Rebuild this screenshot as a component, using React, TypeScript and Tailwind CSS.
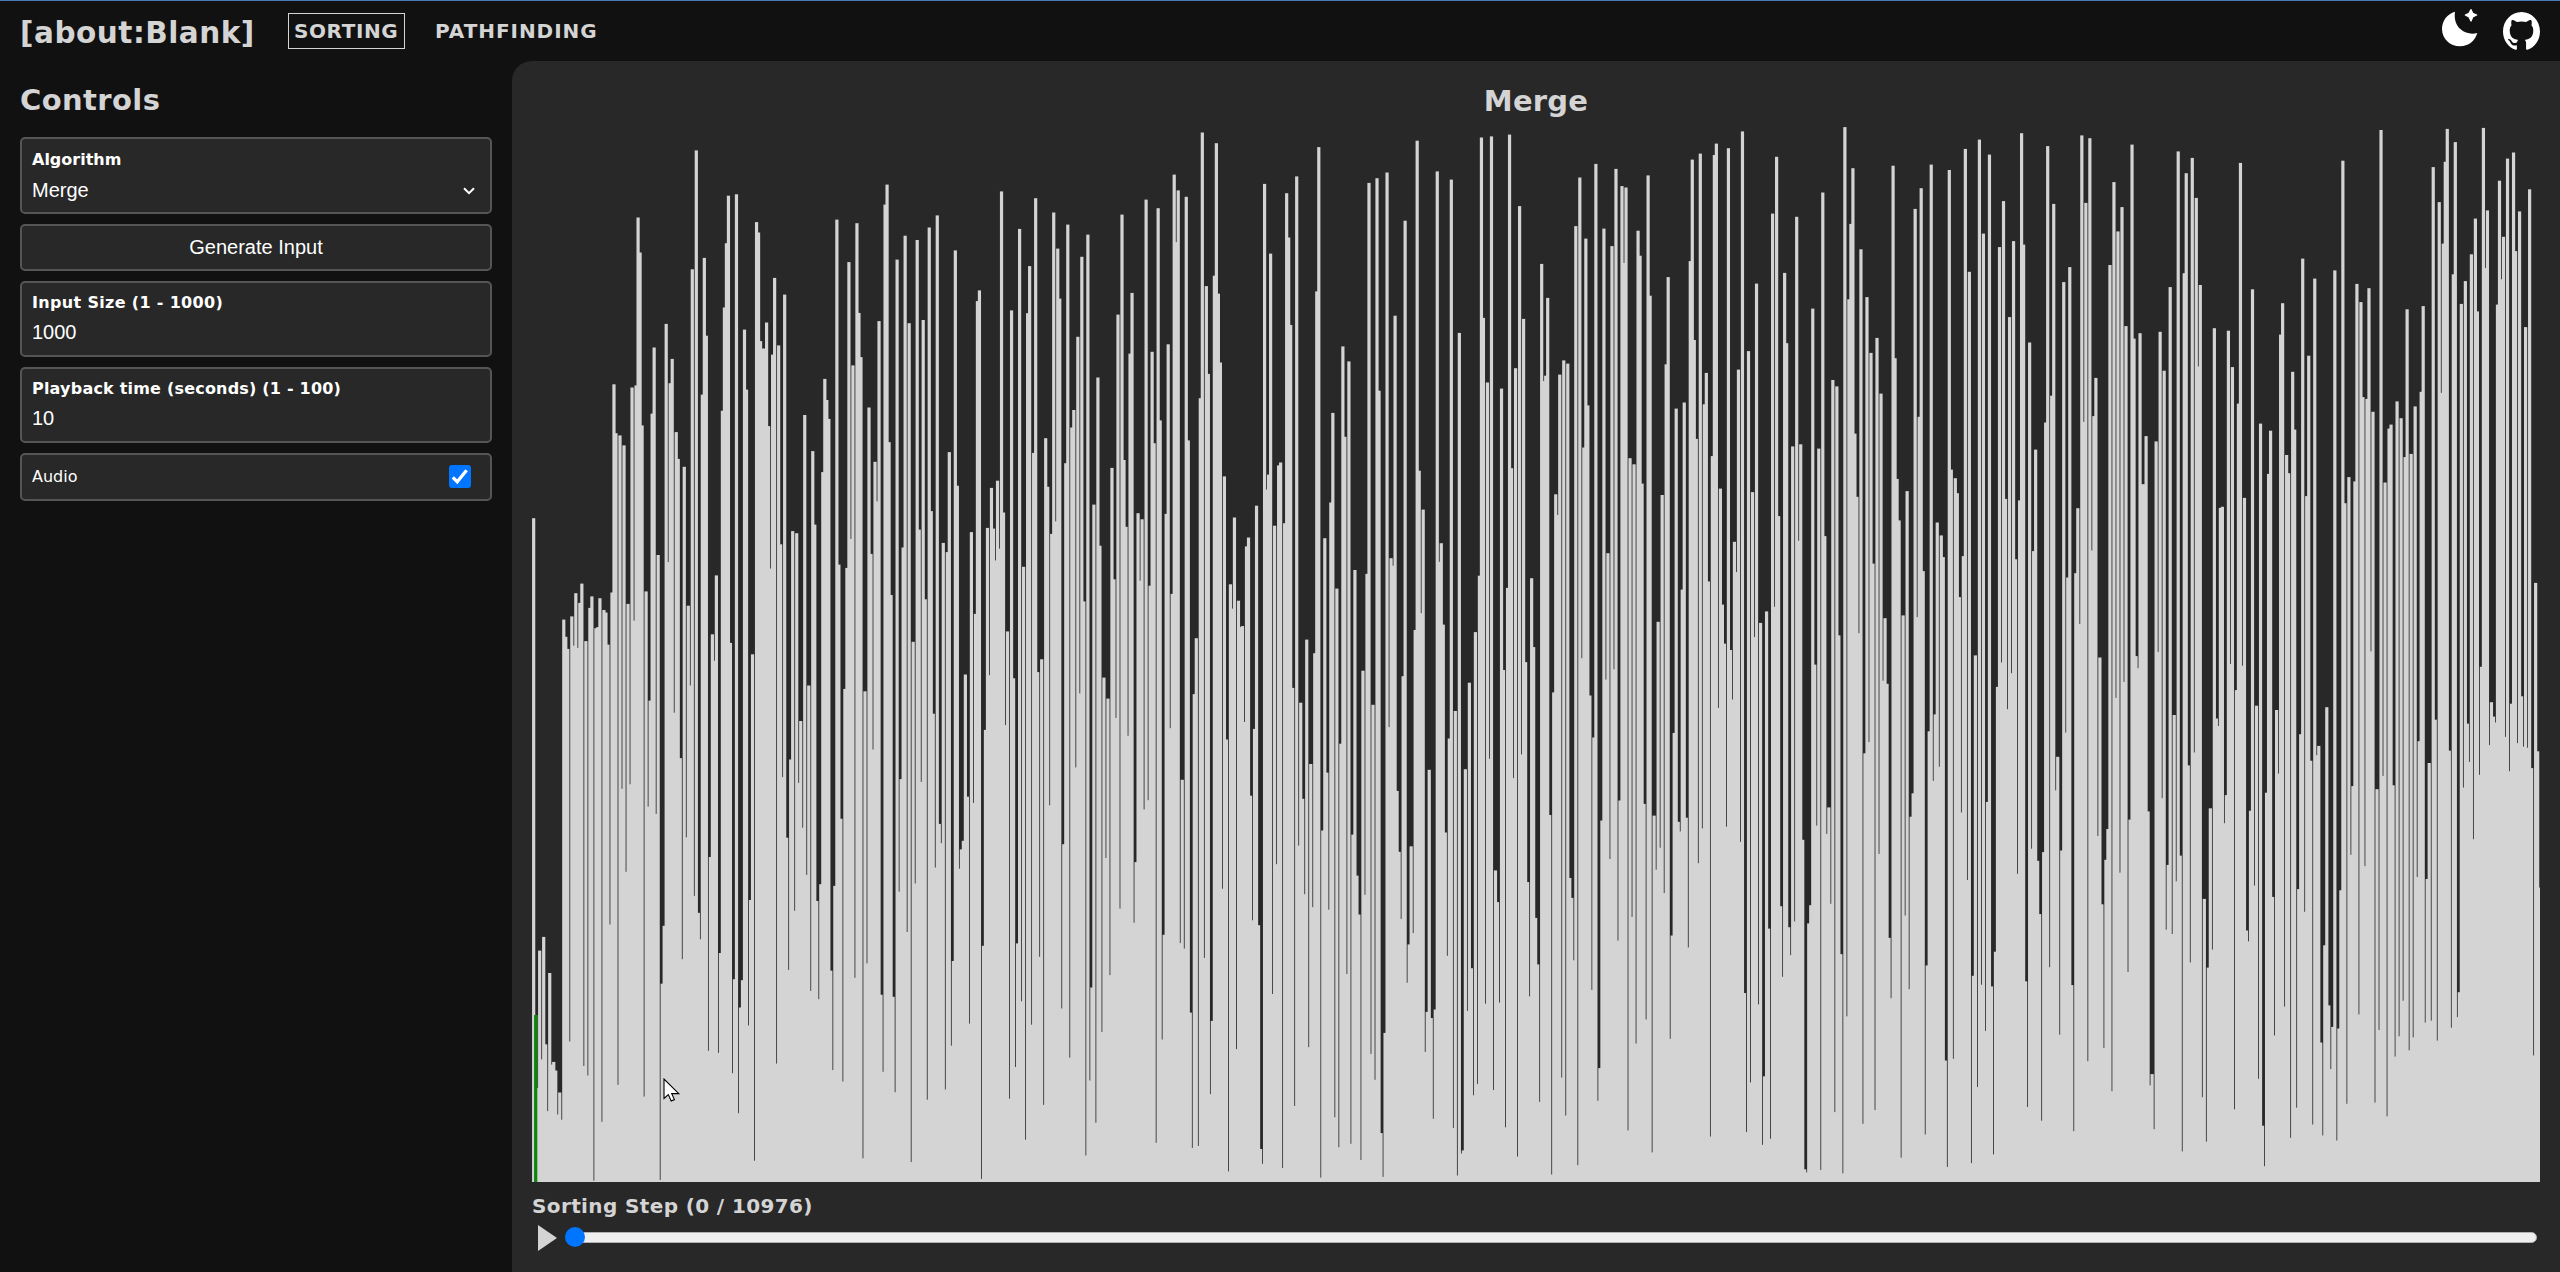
import React from "react";

type Track = { origin: number; first: number; offset: number; scale: number; points: string };

/* Bar tops, stored as "x,y" pairs per stretch of the chart. */
const tracks: Track[] = [
  {
    origin: 41, first: 0, offset: 120, scale: 2.8,
    points:
      "41,1115 131,1399 138,1447 144,1481 155,1390 161,1472 167,1325 173,1478 179,1352 185,1298 197,1459 209,1366 215,1334 227,1423 233,1420 240,1339 251,1372 258,1379 265,1469 275,1323 281,740 288,877 299,883 311,911 324,1355 336,749 342,1402 348,743 354,273 360,371 367,855 378,1320 396,822 402,637 414,1218 438,571 444,1238 450,737 456,669 468,874 474,949 492,971 504,1360 517,418 528,85 547,769 553,386 559,604 577,1440 583,1514 589,1275 607,814 613,525 619,345 625,212 631,1464 649,208 673,587 679,755 698,1496 709,286 715,315 721,619 733,640 739,567 745,857 751,1256 757,657 763,442 775,631 781,1188 794,489 818,1151 830,1157 854,826 878,927 884,1133 908,986 914,725 920,784 927,837 950,279 956,1245 980,1254 987,398 993,1173 998,687 1011,289 1017,540 1023,664 1047,805 1053,1215 1065,957 1071,1068 1077,563 1095,237 1101,181 1107,902 1113,1330 1131,391 1149,1197 1155,324 1167,569 1179,1461 1191,336 1197,1147 1209,560 1216,1342 1227,301 1233,1095 1252,267 1270,1184 1281,1210 1288,930 1306,365 1312,1024 1336,1553 1354,1154 1365,1383 1372,507 1378,477 1402,1142 1408,1556 1414,1030 1420,1144 1426,1233 1432,1010 1438,1200 1444,200 1450,1099 1463,1432 1474,533 1480,1565 1498,305 1511,1251 1523,541 1528,409 1540,932 1547,219",
  },
  {
    origin: 41, first: 0, offset: 660, scale: 2.904,
    points:
      "47,1031 53,1243 59,844 65,1160 71,804 77,1116 83,1310 89,909 95,1175 101,1167 107,1192 113,1320 119,1256 125,1335 150,1108 191,1179 203,1207 222,1512 245,1341 270,768 294,1234 306,374 319,615 330,361 372,1268 384,426 390,118 409,447 420,1510 426,940 432,772 462,153 481,285 487,869 499,515 511,74 522,685 535,734 541,811 565,1135 571,572 595,1141 601,851 638,1200 644,927 656,1316 662,1009 668,930 686,1061 692,697 703,1454 769,1172 788,340 800,516 806,900 812,289 824,728 837,357 842,177 848,487 860,624 866,74 872,961 890,700 897,985 902,651 933,902 938,1191 944,656 963,461 968,1224 974,84 1005,923 1028,1447 1034,91 1040,881 1058,260 1083,972 1089,1196 1119,978 1125,1255 1137,673 1143,346 1162,790 1174,1458 1186,649 1204,354 1222,1277 1240,156 1246,603 1258,476 1265,532 1276,1247 1295,1120 1300,874 1317,606 1324,550 1330,525 1336,42 1342,397 1348,1056 1360,415 1384,1507 1390,830 1396,203 1408,44 1456,189 1468,1274 1480,53 1486,1182 1492,823 1504,991 1516,1393 1535,1059 1553,36",
  },
  {
    origin: 17, first: 250, offset: 120, scale: 2.8,
    points:
      "23,1546 35,1510 47,891 53,1027 65,1159 71,259 77,1124 83,360 89,500 107,961 113,293 125,861 131,812 143,607 155,383 162,1348 173,321 192,1077 203,721 210,1192 221,1562 245,974 252,1286 264,545 276,265 282,952 288,1139 300,654 306,484 324,1101 331,1290 336,1118 348,223 360,1304 366,649 372,905 384,247 390,841 408,1103 414,628 426,1327 432,153 439,342 444,197 469,215 475,897 499,1451 511,779 517,35 529,465 535,711 553,436 559,65 565,486 571,679 583,998 601,1300 607,1368 613,1113 625,1346 631,1420 637,1417 649,1194 655,1169 679,1080 703,179 709,1035 716,993 721,374 733,1136 745,967 752,959 763,1129 770,205 776,329 782,574 800,158 830,1455 854,1493 860,480 866,76 884,1171 902,1071 908,820 920,1312 938,634 945,887 956,676 975,1260 999,1544 1011,1271 1017,176 1041,163 1047,758 1071,147 1083,1227 1089,1248 1095,548 1119,1559 1125,282 1155,1428 1161,58 1167,982 1174,1381 1179,1091 1221,144 1227,1237 1233,1185 1240,1413 1263,167 1288,596 1336,1434 1347,1276 1354,49 1360,554 1372,735 1384,46 1414,752 1421,1540 1433,1310 1438,41 1445,975 1457,695 1468,241 1481,557 1487,1518 1505,1283 1511,1476 1535,403 1541,731 1547,716 1553,498",
  },
  {
    origin: 17, first: 250, offset: 660, scale: 2.904,
    points:
      "29,862 41,1292 59,422 95,1012 101,535 119,1155 137,312 150,97 168,1439 180,1221 186,951 198,1344 215,1080 221,51 228,575 234,112 240,915 258,168 270,722 294,220 312,763 318,587 342,434 354,407 379,1402 397,1102 402,798 421,198 451,822 457,348 462,838 481,1024 487,1417 493,99 505,1411 522,865 541,1261 547,1048 577,664 595,1485 589,231 619,1130 643,180 661,394 667,756 673,200 685,770 692,1420 698,1463 729,970 740,593 758,1475 794,1295 788,81 807,539 812,124 818,403 824,680 837,1124 842,302 848,718 872,1503 878,495 890,327 897,725 915,1328 927,1415 932,243 950,912 963,1405 968,507 981,626 987,739 993,1452 999,31 1005,682 1023,1144 1029,130 1035,1219 1053,1374 1059,1501 1065,1083 1077,195 1101,380 1107,557 1113,752 1119,47 1131,937 1137,826 1143,541 1149,793 1186,1138 1192,1022 1198,319 1204,1040 1210,1332 1216,1015 1246,501 1252,859 1258,228 1270,1359 1276,148 1282,1497 1294,1433 1300,1424 1306,317 1312,1019 1318,66 1324,895 1330,1264 1343,1231 1367,998 1378,287 1390,1249 1396,611 1402,703 1408,995 1426,1357 1451,343 1463,1442 1475,274 1493,645 1499,977 1517,749 1523,884 1529,1283 1559,450",
  },
  {
    origin: 29, first: 506, offset: 120, scale: 2.8,
    points:
      "47,1048 53,1106 59,713 71,673 83,682 107,297 119,161 125,1507 131,917 137,332 144,799 167,123 192,304 197,1565 203,1213 216,353 222,1536 228,137 246,185 252,400 258,189 270,947 282,964 293,310 300,380 306,1018 324,155 331,492 354,1405 366,1050 378,684 384,440 408,808 426,1315 432,791 450,395 456,111 463,616 469,893 481,94 493,796 499,708 505,1292 517,941 523,98 529,66 541,1032 547,1357 553,1466 565,79 571,1484 583,1181 589,1266 595,699 607,32 625,647 637,1042 643,1448 649,458 661,1408 679,1376 698,262 704,1363 710,103 716,1109 734,428 740,625 758,914 770,271 776,1178 782,908 818,528 824,1525 836,920 848,203 855,1165 878,728 890,746 897,1443 914,20 926,502 932,291 938,135 945,878 951,1055 957,1437 963,362 981,496 993,652 999,1242 1011,610 1023,766 1035,1395 1059,128 1065,667 1071,1005 1077,1121 1089,1387 1101,1039 1125,249 1131,1392 1137,831 1143,191 1150,1263 1173,125 1191,1127 1203,1163 1210,1224 1228,140 1234,979 1246,1003 1252,1045 1258,1336 1270,1221 1276,81 1288,425 1306,1499 1318,55 1330,318 1348,97 1378,356 1385,1519 1390,227 1396,1061 1408,552 1414,1549 1420,339 1427,1230 1438,1065 1444,37 1451,349 1468,623 1480,1207 1486,923 1516,847 1523,73 1535,772 1541,235",
  },
  {
    origin: 29, first: 506, offset: 660, scale: 2.904,
    points:
      "29,450 35,1494 41,94 65,1213 77,1323 89,633 95,691 101,872 114,1467 149,103 155,958 161,225 174,1280 180,1185 186,466 197,57 210,578 222,27 234,815 240,408 264,1366 276,746 288,1114 312,418 318,1044 336,1430 342,452 348,609 360,545 372,677 391,1100 397,800 403,212 415,470 421,498 439,458 444,835 474,590 487,489 511,1384 535,139 559,484 577,115 601,528 613,967 619,1371 631,1227 655,1000 668,1408 674,1209 686,780 692,1390 722,715 728,920 746,776 752,857 764,759 788,522 794,1479 800,1488 806,765 812,712 830,481 842,1481 860,505 866,428 872,708 884,1313 902,854 908,1491 920,1035 969,1347 975,271 987,238 1005,1307 1018,563 1029,60 1041,69 1047,807 1053,982 1083,1445 1095,742 1107,956 1113,455 1119,387 1156,1378 1162,887 1168,207 1180,351 1186,158 1198,310 1216,1163 1222,1472 1240,1158 1264,443 1282,639 1294,1461 1300,917 1312,1240 1324,943 1336,1077 1342,412 1354,948 1360,1436 1366,847 1372,78 1402,143 1432,621 1457,933 1463,1298 1475,548 1493,583 1499,738 1505,1338 1511,558 1529,890 1547,378 1553,281 1559,1086",
  },
  {
    origin: 23, first: 754, offset: 120, scale: 2.8,
    points:
      "71,454 83,1281 89,412 107,1269 113,1087 119,1411 125,43 131,845 137,232 149,51 155,1205 161,829 167,722 179,1505 209,406 222,174 234,312 246,244 258,577 276,69 282,612 288,1501 294,1535 300,597 312,1020 318,885 348,900 354,1490 360,593 372,702 390,468 414,88 432,429 438,149 456,106 468,218 474,690 480,462 523,583 541,1086 547,1083 565,590 571,1523 577,692 595,794 601,120 607,1528 613,1058 637,474 661,850 685,991 691,870 721,601 728,513 740,938 746,989 758,705 764,867 788,388 800,1053 806,660 824,444 884,421 908,114 915,1073 926,1000 944,1012 950,459 962,510 968,776 981,781 987,471 993,1488 999,817 1023,28 1035,1015 1047,864 1053,853 1071,788 1083,835 1095,944 1101,530 1113,935 1125,802 1143,761 1149,521 1179,132 1197,230 1203,764 1210,346 1216,117 1222,25 1240,432 1246,62 1264,515 1276,451 1294,376 1306,276 1312,536 1324,1531 1330,22 1336,414 1342,253 1372,517 1378,170 1384,446 1390,327 1402,108 1420,91 1427,367 1438,256 1457,580 1468,194 1487,1296",
  },
  {
    origin: 23, first: 754, offset: 660, scale: 2.562,
    points:
      "29,787 47,334 53,248 59,960 65,488 77,186 95,833 101,1207 144,1028 174,451 186,626 192,994 198,512 204,433 216,1105 228,97 240,545 252,56 264,799 270,409 324,388 330,1090 336,1061 342,1202 366,354 378,691 384,525 396,702 402,141 408,567 421,501 427,1259 445,270 451,775 463,237 487,1120 493,612 499,1234 505,788 511,380 517,742 529,150 535,169 553,418 559,346 583,1151 589,77 619,693 625,721 631,386 643,578 649,117 655,1073 667,1193 673,1297 679,340 698,607 704,962 710,128 716,291 733,888 752,1224 770,1147 776,587 782,190 794,645 812,258 818,1190 830,244 836,220 842,980 848,1218 854,731 860,121 866,885 872,1048 878,940 890,1231 896,944 902,590 920,1137 932,499 938,323 957,908 975,528 1005,1134 1011,331 1017,948 1029,297 1041,1169 1059,321 1065,1016 1077,964 1089,873 1107,1000 1119,967 1131,556 1137,208 1155,929 1161,561 1167,264 1173,924 1186,153 1192,975 1228,232 1234,942 1252,915 1258,851 1270,327 1282,163 1288,261 1300,459 1318,294 1348,218 1354,108 1360,145 1366,160 1397,197 1409,285 1415,112 1432,213 1445,93 1451,222 1463,225 1475,277 1481,1013 1493,234 1499,583",
  },
];

const COUNT = 1000;
const TOP = 127;
const BASE = 1182;

function buildHeights(): number[] {
  const heights: (number | undefined)[] = new Array(COUNT).fill(undefined);
  for (const t of tracks) {
    for (const pair of t.points.split(" ")) {
      const [x, y] = pair.split(",").map(Number);
      const i = t.first + Math.round((x - t.origin) / 6.024);
      if (i >= 0 && i < COUNT) heights[i] = BASE - (t.offset + y / t.scale);
    }
  }
  return heights.map((h, i) => {
    if (h !== undefined) return h;
    let l = i - 1;
    let r = i + 1;
    while (l >= 0 && heights[l] === undefined) l--;
    while (r < COUNT && heights[r] === undefined) r++;
    return Math.min(heights[l] ?? 600, heights[r] ?? 600);
  });
}

const heights = buildHeights();

function Chart() {
  const bar = (i: number, fill: string) => (
    <rect
      key={`${fill}${i}`}
      x={(1.66 + 2.008 * i - 1.6).toFixed(2)}
      y={(BASE - TOP - heights[i]).toFixed(1)}
      width="3.2"
      height={heights[i].toFixed(1)}
      fill={fill}
    />
  );
  return (
    <svg className="block h-[1055px] w-[2008px] shrink-0 overflow-hidden" viewBox="0 0 2008 1055">
      {heights.map((_, i) => bar(i, "#d4d4d4"))}
      {bar(1, "#0a870a")}
    </svg>
  );
}

function Field({ label, value, className }: { label: string; value: string; className: string }) {
  return (
    <div className="flex h-[76px] flex-col rounded-[5px] border-2 border-[#555] bg-[#282828] pt-[10px] pl-[10px] text-white">
      <span className={`text-[16px] leading-[20px] font-bold whitespace-nowrap ${className}`}>{label}</span>
      <span className="mt-[7px] font-['Liberation_Sans',sans-serif] text-[20px] leading-[24px]">{value}</span>
    </div>
  );
}

function MoonIcon() {
  return (
    <svg className="h-[40px] w-[38px]" viewBox="124 24 114 120" fill="#fff">
      <path d="M166 35C163 55 168 75 183 88C197 100 215 104 233 99C226 123 206 139 181 139C151 139 127 116 127 87C127 62 143 41 166 35Z" />
      <path
        d="M214 29L219 40L231 45L219 51L214 63L208 51L197 45L208 40Z"
        stroke="#fff"
        strokeWidth="4"
        strokeLinejoin="round"
      />
    </svg>
  );
}

function GithubIcon() {
  return (
    <svg className="h-[38px] w-[37px]" viewBox="0 0 97.7 96.4" preserveAspectRatio="none" fill="#fff">
      <path d="M48.854 0C21.839 0 0 22 0 49.217c0 21.756 13.993 40.172 33.405 46.69 2.427.49 3.316-1.059 3.316-2.362 0-1.141-.08-5.052-.08-9.127-13.59 2.934-16.42-5.867-16.42-5.867-2.184-5.704-5.42-7.17-5.42-7.17-4.448-3.015.324-3.015.324-3.015 4.934.326 7.523 5.052 7.523 5.052 4.367 7.496 11.404 5.378 14.235 4.074.404-3.178 1.699-5.378 3.074-6.6-10.839-1.141-22.243-5.378-22.243-24.283 0-5.378 1.94-9.778 5.014-13.2-.485-1.222-2.184-6.275.486-13.038 0 0 4.125-1.304 13.426 5.052a46.97 46.97 0 0 1 12.214-1.63c4.125 0 8.33.571 12.213 1.63 9.302-6.356 13.427-5.052 13.427-5.052 2.67 6.763.97 11.816.485 13.038 3.155 3.422 5.015 7.822 5.015 13.2 0 18.905-11.404 23.06-22.324 24.283 1.78 1.548 3.316 4.481 3.316 9.126 0 6.6-.08 11.897-.08 13.526 0 1.304.89 2.853 3.316 2.364 19.412-6.52 33.405-24.935 33.405-46.691C97.707 22 75.788 0 48.854 0z" />
    </svg>
  );
}

export default function App() {
  return (
    <div className="relative flex h-[1272px] w-[2560px] flex-col overflow-hidden bg-[#111] font-['DejaVu_Sans',sans-serif] text-[#d4d4d4]">
      <header className="flex h-[61px] shrink-0 items-start border-t border-[#4a7ab5] pl-[20px]">
        <div className="w-[268px] pt-[14px] text-[29.5px] leading-[36px] font-bold tracking-[0.5px] whitespace-nowrap">[about:Blank]</div>
        <nav className="flex pt-[12px] text-[20px] leading-[35px] font-bold">
          <a className="h-[36px] w-[117px] border border-[#d4d4d4] pl-[5px] tracking-[0.6px]">SORTING</a>
          <a className="ml-[30px] pt-px tracking-[0.95px]">PATHFINDING</a>
        </nav>
        <div className="ml-auto flex pr-[20px]">
          <div className="pt-[7px]"><MoonIcon /></div>
          <div className="ml-[24px] pt-[11px]"><GithubIcon /></div>
        </div>
      </header>

      <div className="flex grow">
        <aside className="flex w-[512px] shrink-0 flex-col gap-[10px] pr-[20px] pl-[20px]">
          <h2 className="h-[66px] pt-[21px] text-[29px] leading-[36px] font-bold tracking-[0.4px]">Controls</h2>
          <div className="flex h-[77px] flex-col rounded-[5px] border-2 border-[#555] bg-[#282828] pt-[10px] pr-[15px] pl-[10px] text-white">
            <span className="text-[16px] leading-[22px] font-bold">Algorithm</span>
            <div className="mt-[6px] flex items-center justify-between">
              <span className="font-['Liberation_Sans',sans-serif] text-[20px] leading-[26px]">Merge</span>
              <svg className="mt-[2px] h-[8px] w-[12px]" viewBox="0 0 12 8" fill="none" stroke="#fff" strokeWidth="2">
                <path d="M1 1.2L6 6.2L11 1.2" />
              </svg>
            </div>
          </div>
          <button className="h-[47px] rounded-[5px] border-2 border-[#555] bg-[#282828] font-['Liberation_Sans',sans-serif] text-[20px] leading-[43px] text-white">
            Generate Input
          </button>
          <Field label="Input Size (1 - 1000)" value="1000" className="tracking-[0.33px]" />
          <Field label="Playback time (seconds) (1 - 100)" value="10" className="tracking-[0.2px]" />
          <div className="flex h-[48px] items-center justify-between rounded-[5px] border-2 border-[#555] bg-[#282828] pr-[18px] pl-[10px] text-[16px] text-white">
            <span>Audio</span>
            <span className="mr-px mb-px flex h-[23px] w-[22px] items-center justify-center rounded-[3px] bg-[#0075ff]">
              <svg className="h-[23px] w-[22px]" viewBox="0 0 23 23" fill="none" stroke="#fff" strokeWidth="3.4">
                <path d="M4 12.4L8.6 17L18.4 5" />
              </svg>
            </span>
          </div>
        </aside>

        <main className="flex grow flex-col rounded-tl-[20px] bg-[#282828] pl-[20px]">
          <h1 className="h-[66px] w-[2008px] pt-[22px] text-center text-[29px] leading-[36px] font-bold tracking-[0.2px]">Merge</h1>
          <Chart />
          <div className="mt-[10px] h-[28px] text-[20px] leading-[28px] font-bold tracking-[0.38px]">Sorting Step (0 / 10976)</div>
          <div className="mt-px flex h-[32px] items-center">
            <svg className="mt-[2px] ml-[6px] h-[26px] w-[19px]" viewBox="0 0 19 26" fill="#d4d4d4">
              <path d="M0 0L19 13L0 26Z" />
            </svg>
            <div className="ml-[8px] flex h-[20px] w-[1972px] items-center">
              <span className="z-10 h-[20px] w-[20px] shrink-0 rounded-full bg-[#0075ff]" />
              <span className="-ml-[12px] h-[11px] grow rounded-full border border-[#b2b2b2] bg-[#efefef]" />
            </div>
          </div>
        </main>
      </div>

      <svg className="absolute top-[1078px] left-[663px] h-[25px] w-[18px]" viewBox="0 0 18 25" fill="#fff" stroke="#000" strokeWidth="1.1">
        <path d="M1 1V20.5L5.3 16.6L8.2 23L11.4 21.6L8.7 15.6H15.8Z" />
      </svg>
    </div>
  );
}
